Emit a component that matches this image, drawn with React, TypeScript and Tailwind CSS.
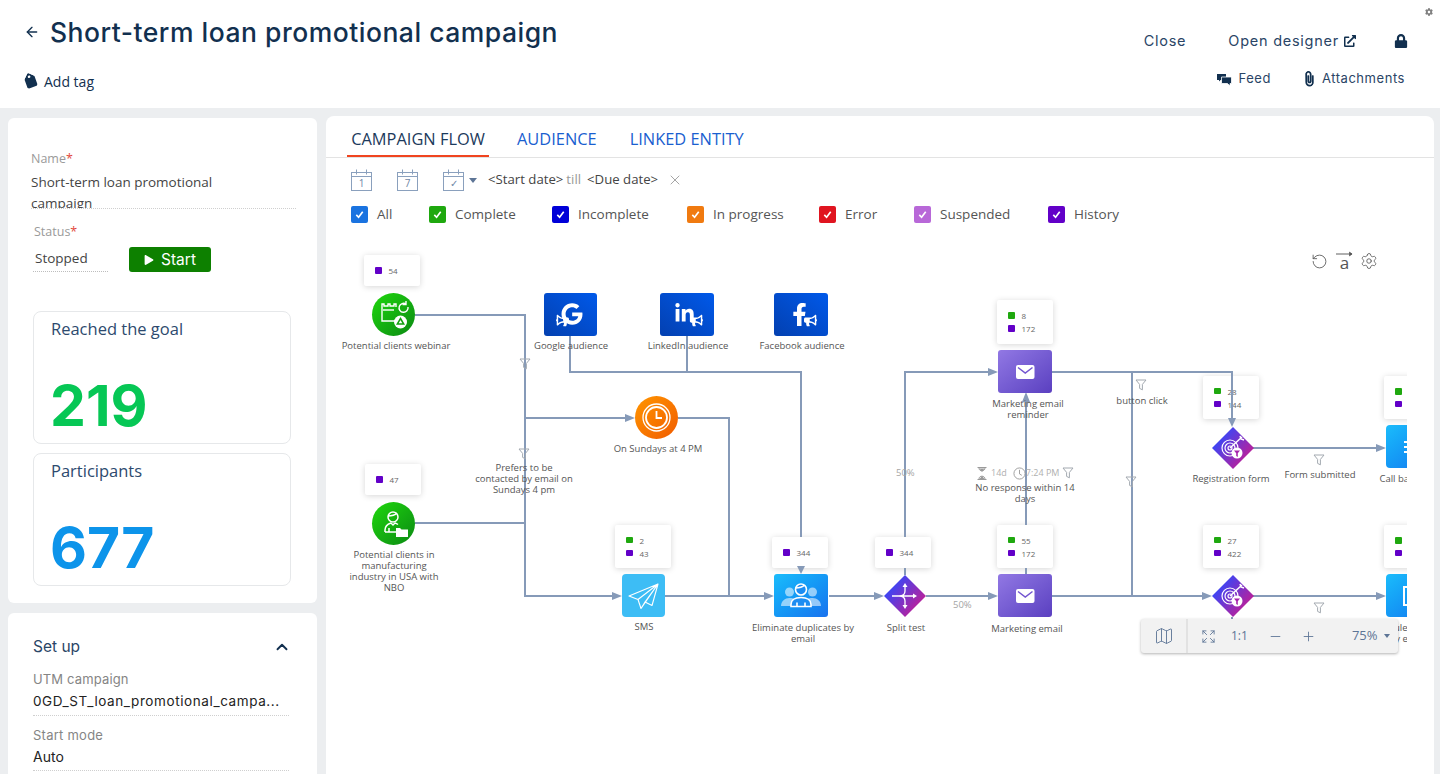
import React from 'react';
import { ArrowLeft, ChevronUp, RotateCcw, Settings, X, Map as MapIcon, Minus, Plus, Expand } from 'lucide-react';
import { FaTag, FaLock, FaPaperclip, FaExternalLinkAlt, FaGoogle, FaLinkedinIn, FaFacebookF, FaBullhorn, FaPlay, FaCog } from 'react-icons/fa';

const LINE = '#869ab8';
const GREEN = 'bg-[#1fa80f]';
const PURPLE = 'bg-[#6200c8]';

const filters = [
  { label: 'All', box: 'bg-[#1a73e0]', width: 'w-[78px]' },
  { label: 'Complete', box: 'bg-[#1fa80f]', width: 'w-[123px]' },
  { label: 'Incomplete', box: 'bg-[#0000d8]', width: 'w-[135px]' },
  { label: 'In progress', box: 'bg-[#f07a10]', width: 'w-[132px]' },
  { label: 'Error', box: 'bg-[#e01520]', width: 'w-[95px]' },
  { label: 'Suspended', box: 'bg-[#b868d8]', width: 'w-[134px]' },
  { label: 'History', box: 'bg-[#6200c8]', width: 'w-[90px]' },
];

// positions below are canvas offsets, canvas starts at 326,240 in the page
const statCards = [
  { pos: 'left-[38px] top-[15px] h-[31px]', rows: [{ c: PURPLE, n: '54' }] },
  { pos: 'left-[39px] top-[224px] h-[31px]', rows: [{ c: PURPLE, n: '47' }] },
  { pos: 'left-[289px] top-[285px] h-[43px]', rows: [{ c: GREEN, n: '2' }, { c: PURPLE, n: '43' }] },
  { pos: 'left-[446px] top-[297px] h-[31px]', rows: [{ c: PURPLE, n: '344' }] },
  { pos: 'left-[549px] top-[297px] h-[31px]', rows: [{ c: PURPLE, n: '344' }] },
  { pos: 'left-[671px] top-[60px] h-[44px]', rows: [{ c: GREEN, n: '8' }, { c: PURPLE, n: '172' }] },
  { pos: 'left-[671px] top-[285px] h-[43px]', rows: [{ c: GREEN, n: '55' }, { c: PURPLE, n: '172' }] },
  { pos: 'left-[877px] top-[136px] h-[43px]', rows: [{ c: GREEN, n: '28' }, { c: PURPLE, n: '144' }] },
  { pos: 'left-[877px] top-[285px] h-[43px]', rows: [{ c: GREEN, n: '27' }, { c: PURPLE, n: '422' }] },
  { pos: 'left-[1058px] top-[136px] h-[43px]', rows: [{ c: GREEN, n: '' }, { c: PURPLE, n: '' }] },
  { pos: 'left-[1058px] top-[285px] h-[43px]', rows: [{ c: GREEN, n: '' }, { c: PURPLE, n: '' }] },
];

const labels = [
  { pos: 'left-[70px] top-[100px]', lines: ['Potential clients webinar'] },
  { pos: 'left-[245px] top-[100px]', lines: ['Google audience'] },
  { pos: 'left-[362px] top-[100px]', lines: ['LinkedIn audience'] },
  { pos: 'left-[476px] top-[100px]', lines: ['Facebook audience'] },
  { pos: 'left-[332px] top-[203px]', lines: ['On Sundays at 4 PM'] },
  { pos: 'left-[198px] top-[222px]', lines: ['Prefers to be', 'contacted by email on', 'Sundays 4 pm'] },
  { pos: 'left-[68px] top-[309px]', lines: ['Potential clients in', 'manufacturing', 'industry in USA with', 'NBO'] },
  { pos: 'left-[318px] top-[381px]', lines: ['SMS'] },
  { pos: 'left-[477px] top-[382px]', lines: ['Eliminate duplicates by', 'email'] },
  { pos: 'left-[580px] top-[382px]', lines: ['Split test'] },
  { pos: 'left-[701px] top-[383px]', lines: ['Marketing email'] },
  { pos: 'left-[702px] top-[158px]', lines: ['Marketing email', 'reminder'] },
  { pos: 'left-[816px] top-[155px]', lines: ['button click'] },
  { pos: 'left-[905px] top-[233px]', lines: ['Registration form'] },
  { pos: 'left-[994px] top-[229px]', lines: ['Form submitted'] },
  { pos: 'left-[1073px] top-[233px]', lines: ['Call back'] },
  { pos: 'left-[699px] top-[242px]', lines: ['No response within 14', 'days'] },
  { pos: 'left-[1070px] top-[382px]', lines: ['Schedule call', 'send by email'] },
];

function Funnel({ x, y }: { x: number; y: number }) {
  return (
    <path
      d={`M${x - 5} ${y - 5}h10l-3.6 4.4v5.4l-2.8-1.4v-4z`}
      fill="none"
      stroke="#a3a9b0"
      strokeWidth={1}
      strokeLinejoin="round"
    />
  );
}

function Connectors() {
  const lines = [
    '415,315 525,315 525,596 614,596',
    '525,418 627,418',
    '678,418 729,418 729,596',
    '415,523 525,523',
    '665,596 766,596',
    '570,335 570,372 801,372 801,537',
    '687,335 687,372',
    '801,568 801,572',
    '829,596 876,596',
    '905,537 905,372 990,372',
    '905,568 905,575',
    '926,596 990,596',
    '1026,525 1026,398',
    '1026,568 1026,574',
    '1052,372 1232,372 1232,420',
    '1132,372 1132,596',
    '1052,596 1204,596',
    '1253,448 1378,448',
    '1253,596 1378,596',
    '1232,617 1232,632',
  ];
  const right = [[622, 596], [635, 418], [774, 596], [884, 596], [998, 372], [998, 596], [1212, 596], [1386, 448], [1386, 596]];
  return (
    <svg className="absolute inset-0 h-full w-full" viewBox="326 240 1081 534">
      {lines.map((l) => (
        <polyline key={l} points={l} fill="none" stroke={LINE} strokeWidth={2} />
      ))}
      {right.map(([x, y]) => (
        <polygon key={`${x}-${y}`} points={`${x},${y} ${x - 10},${y - 4} ${x - 10},${y + 4}`} fill={LINE} />
      ))}
      <polygon points="801,574 797,566 805,566" fill={LINE} />
      <polygon points="1232,427 1228,418 1236,418" fill={LINE} />
      <polygon points="1026,392 1022,402 1030,402" fill={LINE} />
      <Funnel x={525} y={364} />
      <Funnel x={524} y={454} />
      <Funnel x={1141} y={385} />
      <Funnel x={1068} y={473} />
      <Funnel x={1319} y={460} />
      <Funnel x={1131} y={482} />
      <Funnel x={1319} y={608} />
    </svg>
  );
}

function WebinarIcon() {
  return (
    <svg viewBox="0 0 43 43" className="h-full w-full" fill="none" stroke="#fff" strokeWidth={1.4}>
      <path d="M24 14V11h-2v2h-4v-2h-2v2h-4v-2h-2v17h14" />
      <path d="M11 17h11" />
      <path d="M36 14a4.5 4.5 0 1 1-2-3M34 8v3.5h-3.5" />
      <circle cx="28.5" cy="29" r="6.5" fill="#fff" stroke="none" />
      <path d="M28.500 25.500l3.200 5.500h-6.400z" stroke="#12a00e" strokeWidth={1.5} />
    </svg>
  );
}

function ClientIcon() {
  return (
    <svg viewBox="0 0 43 43" className="h-full w-full" fill="none" stroke="#fff" strokeWidth={1.5}>
      <circle cx="21" cy="15" r="5" />
      <path d="M16 14c3 0 7-1 9-3" />
      <path d="M13 30v-2c0-4 3-6 6-7l2 2 2-2c1 .3 2 .8 3 1.500M17 30v-4M13 30h12" />
      <path d="M24 26h4l1.500 1.500H36V35H24z" fill="#fff" stroke="none" />
    </svg>
  );
}

function ClockIcon() {
  return (
    <svg viewBox="0 0 43 43" className="h-full w-full" fill="none" stroke="#fff" strokeWidth={1.3}>
      <circle cx="21.500" cy="21.500" r="13.500" />
      <circle cx="21.500" cy="21.500" r="10.500" strokeWidth={1.8} />
      <path d="M21.500 15v7h5.500" strokeWidth={1.8} />
    </svg>
  );
}

function PlaneIcon() {
  return (
    <svg viewBox="0 0 43 43" className="h-full w-full" fill="none" stroke="#fff" strokeWidth={1.1} strokeLinejoin="round">
      <path d="M36 10L7 22l9 3.500L36 10zM16 25.500l3 9 4-6.500M36 10L23 28l7 3.500L36 10zM36 10L19 34.500" />
    </svg>
  );
}

function PeopleIcon() {
  return (
    <svg viewBox="0 0 54 43" className="h-full w-full" fill="none">
      <g fill="#fff" opacity={0.55}>
        <circle cx="15.500" cy="18" r="4.500" />
        <path d="M7 32c0-5 4-8 8.500-8s6 2 6 4l-2 4z" />
        <circle cx="38.500" cy="18" r="4.500" />
        <path d="M47 32c0-5-4-8-8.500-8s-6 2-6 4l2 4z" />
      </g>
      <circle cx="27" cy="15.500" r="5.500" fill="#1d8df2" stroke="#fff" strokeWidth={1.6} />
      <path d="M21.500 14c3 0 7-1 9-3" stroke="#fff" strokeWidth={1.6} />
      <path d="M17 32.500v-2c0-4 3.500-7 10-7s10 3 10 7v2zM23 32.500v-4M31 32.500v-4" fill="#1d8df2" stroke="#fff" strokeWidth={1.6} />
    </svg>
  );
}

function SplitIcon({ id }: { id: string }) {
  return (
    <svg viewBox="0 0 42 42" className="h-full w-full">
      <defs>
        <linearGradient id={id} x1="0.15" y1="0.2" x2="0.9" y2="0.8">
          <stop offset="0" stopColor="#3348fb" />
          <stop offset="1" stopColor="#c51d93" />
        </linearGradient>
      </defs>
      <polygon points="21,0 42,21 21,42 0,21" fill={`url(#${id})`} />
      <g stroke="#fff" strokeWidth={1.3} fill="#fff">
        <path d="M8 21h23M15 21c4 0 6-1.500 6-5V11M15 21c4 0 6 1.500 6 5v5" fill="none" />
        <path d="M33 21l-4-2.500v5zM21 8l-2.500 4h5zM21 34l-2.500-4h5z" stroke="none" />
      </g>
    </svg>
  );
}

function TargetIcon({ id }: { id: string }) {
  return (
    <svg viewBox="0 0 42 42" className="h-full w-full">
      <defs>
        <linearGradient id={id} x1="0.15" y1="0.2" x2="0.9" y2="0.8">
          <stop offset="0" stopColor="#3348fb" />
          <stop offset="1" stopColor="#c51d93" />
        </linearGradient>
      </defs>
      <polygon points="21,0 42,21 21,42 0,21" fill={`url(#${id})`} />
      <g stroke="#fff" fill="none" strokeWidth={1.2}>
        <circle cx="18" cy="21" r="8" />
        <circle cx="18" cy="21" r="5" />
        <circle cx="18" cy="21" r="2" />
        <path d="M18 21L30 10" strokeWidth={1.5} />
        <path d="M28 9l1 3 3 1" strokeWidth={1.5} />
      </g>
      <circle cx="25" cy="26" r="5.500" fill="#fff" />
      <path d="M22 23.500h6l-2.200 2.700V30l-1.600-1v-2.800z" fill="#a724ad" />
    </svg>
  );
}

function MailIcon() {
  return (
    <svg viewBox="0 0 54 43" className="h-full w-full">
      <rect x="18" y="15" width="18.500" height="14" rx="2" fill="#fff" />
      <path d="M20 17.500l7.250 5.500 7.250-5.500" fill="none" stroke="#7355d0" strokeWidth={1.5} />
    </svg>
  );
}

function FeedIcon() {
  return (
    <svg viewBox="0 0 15 13" className="h-[13px] w-[15px]" fill="#12304f">
      <path d="M0 1h9v6H3.500L2 8.500V7H0z" />
      <path d="M4.500 4h10v6.500H13V13l-2.500-2.500h-6z" stroke="#fff" strokeWidth={0.8} />
    </svg>
  );
}

function SocialIcon({ flip, children }: { flip?: boolean; children: React.ReactNode }) {
  return (
    <div className="relative h-[24px] w-[26px] text-white">
      {children}
      {flip ? (
        <FaBullhorn className="absolute bottom-[0px] left-[-2px] h-[13px] w-[13px] -scale-x-100" />
      ) : (
        <FaBullhorn className="absolute bottom-[0px] right-[-3px] h-[13px] w-[13px]" />
      )}
    </div>
  );
}

function Canvas() {
  return (
    <div className="relative h-[534px] w-[1081px] overflow-hidden font-['Open_Sans',sans-serif]">
      {statCards.map((card) => (
        <div
          key={card.pos}
          className={`absolute flex w-[56px] flex-col justify-center gap-[6px] rounded-[2px] bg-white pl-[11px] shadow-[0_1px_6px_rgba(0,0,0,0.16)] ${card.pos}`}
        >
          {card.rows.map((r, i) => (
            <div key={i} className="flex items-center gap-[7px] text-[8px] leading-[7px] text-[#666]">
              <span className={`h-[6.500px] w-[6.500px] rounded-[1px] ${r.c}`} />
              {r.n}
            </div>
          ))}
        </div>
      ))}

      <Connectors />

      {/* tiles */}
      <div className="absolute left-[46px] top-[53px] h-[43px] w-[43px] rounded-full bg-linear-to-br from-[#1fd80a] to-[#0b8a12]"><WebinarIcon /></div>
      <div className="absolute left-[46px] top-[262px] h-[43px] w-[43px] rounded-full bg-linear-to-br from-[#1fd80a] to-[#0b8a12]"><ClientIcon /></div>
      <div className="absolute left-[309px] top-[156px] h-[43px] w-[43px] rounded-full bg-linear-to-br from-[#ff9500] to-[#f05a00]"><ClockIcon /></div>
      <div className="absolute left-[218px] top-[53px] flex h-[43px] w-[53px] items-center justify-center rounded-[3px] bg-linear-to-bl from-[#0059ea] to-[#0340b0]">
        <SocialIcon flip><FaGoogle className="ml-[3px] h-[22px] w-[22px]" /></SocialIcon>
      </div>
      <div className="absolute left-[334px] top-[53px] flex h-[43px] w-[54px] items-center justify-center rounded-[3px] bg-linear-to-bl from-[#0059ea] to-[#0340b0]">
        <SocialIcon><FaLinkedinIn className="h-[21px] w-[21px]" /></SocialIcon>
      </div>
      <div className="absolute left-[448px] top-[53px] flex h-[43px] w-[54px] items-center justify-center rounded-[3px] bg-linear-to-bl from-[#0059ea] to-[#0340b0]">
        <SocialIcon><FaFacebookF className="h-[23px] w-[23px]" /></SocialIcon>
      </div>
      <div className="absolute left-[296px] top-[334px] h-[43px] w-[43px] rounded-[4px] bg-[#3dbdf5]"><PlaneIcon /></div>
      <div className="absolute left-[448px] top-[334px] h-[43px] w-[54px] rounded-[3px] bg-linear-to-br from-[#1cbcfb] to-[#1a72ee]"><PeopleIcon /></div>
      <div className="absolute left-[558px] top-[335px] h-[42px] w-[42px]"><SplitIcon id="split-a" /></div>
      <div className="absolute left-[672px] top-[110px] h-[43px] w-[54px] rounded-[3px] bg-linear-to-br from-[#9278e4] to-[#5b3fc0]"><MailIcon /></div>
      <div className="absolute left-[672px] top-[334px] h-[43px] w-[54px] rounded-[3px] bg-linear-to-br from-[#9278e4] to-[#5b3fc0]"><MailIcon /></div>
      <div className="absolute left-[886px] top-[187px] h-[42px] w-[42px]"><TargetIcon id="target-a" /></div>
      <div className="absolute left-[886px] top-[335px] h-[42px] w-[42px]"><TargetIcon id="target-b" /></div>
      <div className="absolute left-[1060px] top-[185px] flex h-[43px] w-[54px] flex-col items-end justify-center gap-[3px] rounded-[4px] bg-linear-to-br from-[#1cbcfb] to-[#1a72ee] pr-[30px]">
        <span className="h-[2px] w-[6px] bg-white" />
        <span className="h-[2px] w-[6px] bg-white" />
        <span className="h-[2px] w-[6px] bg-white" />
      </div>
      <div className="absolute left-[1060px] top-[334px] h-[43px] w-[54px] rounded-[4px] bg-linear-to-br from-[#1cbcfb] to-[#1a72ee]">
        <span className="absolute left-[17px] top-[12px] h-[20px] w-[20px] border-2 border-white" />
      </div>

      {/* labels */}
      {labels.map((l) => (
        <div key={l.pos} className={`absolute w-max -translate-x-1/2 text-center text-[9.500px] leading-[11px] text-[#555] ${l.pos}`}>
          {l.lines.map((t) => (
            <div key={t}>{t}</div>
          ))}
        </div>
      ))}

      <span className="absolute left-[570px] top-[227px] text-[9.500px] leading-[12px] text-[#a5a5a5]">50%</span>
      <span className="absolute left-[627px] top-[359px] text-[9.500px] leading-[12px] text-[#a5a5a5]">50%</span>

      {/* wait time above the no response label */}
      <div className="absolute left-[651px] top-[226px] flex items-center text-[9px] leading-[14px] text-[#b0b0b0]">
        <svg viewBox="0 0 10 13" className="h-[13px] w-[10px]" fill="none" stroke="#9a9a9a" strokeWidth={1}>
          <path d="M0.500 0.500h9M0.500 12.500h9M2 1c0 4 6 3.500 6 0M2 12c0-4 6-3.500 6 0" />
          <path d="M2.500 1.500h5L5 5zM2.500 12l2.500-3 2.500 3z" fill="#9a9a9a" stroke="none" />
        </svg>
        <span className="ml-[4px]">14d</span>
        <svg viewBox="0 0 14 14" className="ml-[6px] h-[13px] w-[13px]" fill="none" stroke="#9a9a9a" strokeWidth={1}>
          <circle cx="7" cy="7" r="6" />
          <path d="M7 3v4.500l2.500 1.500" />
        </svg>
        <span>7:24 PM</span>
      </div>

      {/* canvas tools */}
      <div className="absolute left-[985px] top-[11px] flex items-center text-[#555]">
        <RotateCcw className="h-[17px] w-[17px]" strokeWidth={1.2} />
        <div className="relative ml-[8px] flex h-[20px] w-[17px] items-end justify-center text-[17px] leading-[17px]">
          <svg viewBox="0 0 18 6" className="absolute left-0 top-0 h-[6px] w-[17px]" fill="none" stroke="#555" strokeWidth={1}>
            <path d="M0 3h16M14 1l3 2-3 2" fill="#555" />
          </svg>
          a
        </div>
        <Settings className="ml-[7px] h-[18px] w-[18px]" strokeWidth={1.1} />
      </div>

      {/* zoom toolbar */}
      <div className="absolute left-[815px] top-[379px] flex h-[34px] w-[257px] items-center rounded-[3px] bg-[#f2f2f2] text-[#5d7596] shadow-[0_1px_3px_rgba(0,0,0,0.3)]">
        <div className="flex h-full w-[47px] items-center justify-center border-r-2 border-[#e2e2e2]">
          <MapIcon className="h-[20px] w-[20px]" strokeWidth={1.1} />
        </div>
        <Expand className="ml-[13px] h-[15px] w-[15px]" strokeWidth={1.4} />
        <span className="ml-[15px] text-[12px]">1:1</span>
        <Minus className="ml-[20px] h-[15px] w-[15px]" strokeWidth={1.4} />
        <Plus className="ml-[18px] h-[15px] w-[15px]" strokeWidth={1.4} />
        <span className="ml-[36px] text-[13px]">75%</span>
        <span className="ml-[6px] h-0 w-0 border-x-[3px] border-t-[4px] border-x-transparent border-t-[#5d7596]" />
      </div>
    </div>
  );
}

function CalendarIcon({ children }: { children: React.ReactNode }) {
  return (
    <div className="relative h-[22px] w-[21px] text-[#8aa0bd]">
      <svg viewBox="0 0 21 22" className="absolute inset-0 h-full w-full" fill="none" stroke="currentColor" strokeWidth={1}>
        <rect x="0.500" y="3.500" width="20" height="18" />
        <path d="M0.500 7.500h20M5.500 0.500v5M15.500 0.500v5" />
      </svg>
      <span className="absolute inset-x-0 top-[8px] text-center text-[10px] leading-[13px] text-[#6f86a5]">{children}</span>
    </div>
  );
}

function StatCard({ title, value, color }: { title: string; value: string; color: string }) {
  return (
    <div className="ml-[25px] h-[133px] w-[258px] rounded-[8px] border border-[#e6e8ea] pl-[17px] pt-[5px]">
      <div className="text-[16.500px] leading-[24px] text-[#2d4a6e]">{title}</div>
      <div className={`-ml-[1px] mt-[36px] font-['Inter',sans-serif] text-[57px] font-bold leading-[57px] ${color}`}>{value}</div>
    </div>
  );
}

export default function App() {
  return (
    <div className="h-[774px] w-[1440px] overflow-hidden bg-[#eceef0] font-['Open_Sans',sans-serif]">
      {/* header */}
      <header className="relative flex h-[108px] justify-between bg-white font-['Inter',sans-serif] text-[#12304f]">
        <div>
          <div className="ml-[24px] mt-[15px] flex items-center">
            <ArrowLeft className="h-[16px] w-[16px]" strokeWidth={2} />
            <h1 className="ml-[10px] text-[26.500px] font-medium leading-[34px] tracking-[0.5px]">Short-term loan promotional campaign</h1>
          </div>
          <div className="ml-[24px] mt-[24px] flex items-center gap-[6px] font-['Open_Sans',sans-serif] text-[14px] leading-[18px]">
            <FaTag className="h-[14px] w-[14px] rotate-[25deg]" />
            Add tag
          </div>
        </div>
        <div className="mr-[32px] mt-[32px] flex flex-col items-end text-[#2a4566]">
          <div className="flex h-[18px] items-center text-[14.500px] tracking-[0.75px]">
            <span>Close</span>
            <span className="ml-[42px]">Open designer</span>
            <FaExternalLinkAlt className="ml-[5px] h-[12px] w-[12px] text-[#12304f]" />
            <FaLock className="ml-[38px] h-[14px] w-[14px] text-[#12304f]" />
          </div>
          <div className="mr-[3px] mt-[20px] flex h-[18px] items-center text-[13px] tracking-[0.55px]">
            <FeedIcon />
            <span className="ml-[6px]">Feed</span>
            <FaPaperclip className="ml-[31px] h-[14px] w-[14px] -rotate-45 text-[#12304f]" />
            <span className="ml-[6px]">Attachments</span>
          </div>
        </div>
        <FaCog className="absolute right-[7px] top-[8px] h-[8px] w-[8px] text-[#808080]" />
      </header>

      <div className="mt-[8px] flex items-start">
        {/* left column */}
        <div className="ml-[8px] mt-[2px] w-[309px]">
          <section className="h-[485px] rounded-[6px] bg-white pt-[33px]">
            <div className="ml-[23px] text-[12.500px] leading-[16px] text-[#9a9a9a]">
              Name<span className="text-[#e2483d]">*</span>
            </div>
            <div className="ml-[23px] mt-[5px] h-[37px] w-[265px] overflow-hidden border-b border-dotted border-[#cfcfcf] text-[13.500px] leading-[21px] text-[#444]">
              <div className="w-[200px]">Short-term loan promotional campaign</div>
            </div>
            <div className="ml-[26px] mt-[15px] text-[12.500px] leading-[16px] text-[#9a9a9a]">
              Status<span className="text-[#e2483d]">*</span>
            </div>
            <div className="ml-[25px] mt-[7px] flex">
              <div className="h-[25px] w-[75px] border-b border-dotted border-[#bdbdbd] pl-[2px] text-[13.500px] leading-[22px] text-[#444]">Stopped</div>
              <button className="ml-[21px] flex h-[25px] w-[82px] items-center justify-center gap-[7px] rounded-[3px] bg-[#0d8000] font-['Inter',sans-serif] text-[15.500px] text-white">
                <FaPlay className="h-[10px] w-[10px]" />
                Start
              </button>
            </div>
            <div className="mt-[39px] flex flex-col gap-[9px]">
              <StatCard title="Reached the goal" value="219" color="text-[#06c755]" />
              <StatCard title="Participants" value="677" color="text-[#0d94ea]" />
            </div>
          </section>

          <section className="mt-[10px] h-[200px] rounded-[6px] bg-white px-[25px] pt-[24px]">
            <div className="flex items-center justify-between font-['Inter',sans-serif] text-[15.500px] leading-[20px] text-[#2a4566]">
              Set up
              <ChevronUp className="mr-[1px] h-[18px] w-[18px] text-[#12304f]" strokeWidth={2.5} />
            </div>
            <div className="mt-[14px] w-[256px] font-['Inter',sans-serif]">
              <div className="text-[13px] leading-[16px] tracking-[0.15px] text-[#858585]">UTM campaign</div>
              <div className="mt-[6px] h-[23px] border-b border-dotted border-[#cfcfcf] text-[13.500px] leading-[16px] tracking-[0.6px] text-[#222]">0GD_ST_loan_promotional_campa...</div>
              <div className="mt-[11px] text-[13px] leading-[16px] tracking-[0.25px] text-[#858585]">Start mode</div>
              <div className="mt-[6px] h-[22px] border-b border-dotted border-[#cfcfcf] text-[14px] leading-[16px] text-[#222]">Auto</div>
            </div>
          </section>
        </div>

        {/* flow panel */}
        <main className="ml-[9px] h-[658px] w-[1108px] rounded-t-[8px] bg-white">
          <div className="flex h-[42px] items-end border-b border-[#e3e3e3] pl-[21px] text-[16.400px]">
            <div className="h-[42px] w-[142px] border-b-2 border-[#f0441f] pt-[13px] text-center leading-[22px] text-[#1c3a5c]">CAMPAIGN FLOW</div>
            <div className="ml-[28px] h-[42px] pt-[13px] leading-[22px] text-[#1a5fd0]">AUDIENCE</div>
            <div className="ml-[33px] h-[42px] pt-[13px] leading-[22px] text-[#1a5fd0]">LINKED ENTITY</div>
          </div>

          <div className="ml-[25px] mt-[9px] flex h-[26px] items-center text-[13.200px] text-[#444]">
            <CalendarIcon>1</CalendarIcon>
            <div className="ml-[25px]"><CalendarIcon>7</CalendarIcon></div>
            <div className="ml-[25px]"><CalendarIcon>✓</CalendarIcon></div>
            <span className="ml-[5px] h-0 w-0 border-x-[4px] border-t-[5px] border-x-transparent border-t-[#5d7596]" />
            <span className="ml-[11px]">&lt;Start date&gt;</span>
            <span className="ml-[3px] text-[#999]">till</span>
            <span className="ml-[6px]">&lt;Due date&gt;</span>
            <X className="ml-[9px] h-[16px] w-[16px] text-[#777]" strokeWidth={1} />
          </div>

          <div className="ml-[25px] mt-[11px] flex h-[20px] items-center text-[13.500px] text-[#555]">
            {filters.map((f) => (
              <div key={f.label} className={`flex items-center ${f.width}`}>
                <span className={`flex h-[17px] w-[17px] items-center justify-center rounded-[2px] ${f.box}`}>
                  <svg viewBox="0 0 12 12" className="h-[11px] w-[11px]" fill="none" stroke="#fff" strokeWidth={1.8}>
                    <path d="M2.500 6.500l2.500 2.500 4.500-6" />
                  </svg>
                </span>
                <span className="ml-[9px]">{f.label}</span>
              </div>
            ))}
          </div>

          <div className="mt-[16px]">
            <Canvas />
          </div>
        </main>
      </div>
    </div>
  );
}
